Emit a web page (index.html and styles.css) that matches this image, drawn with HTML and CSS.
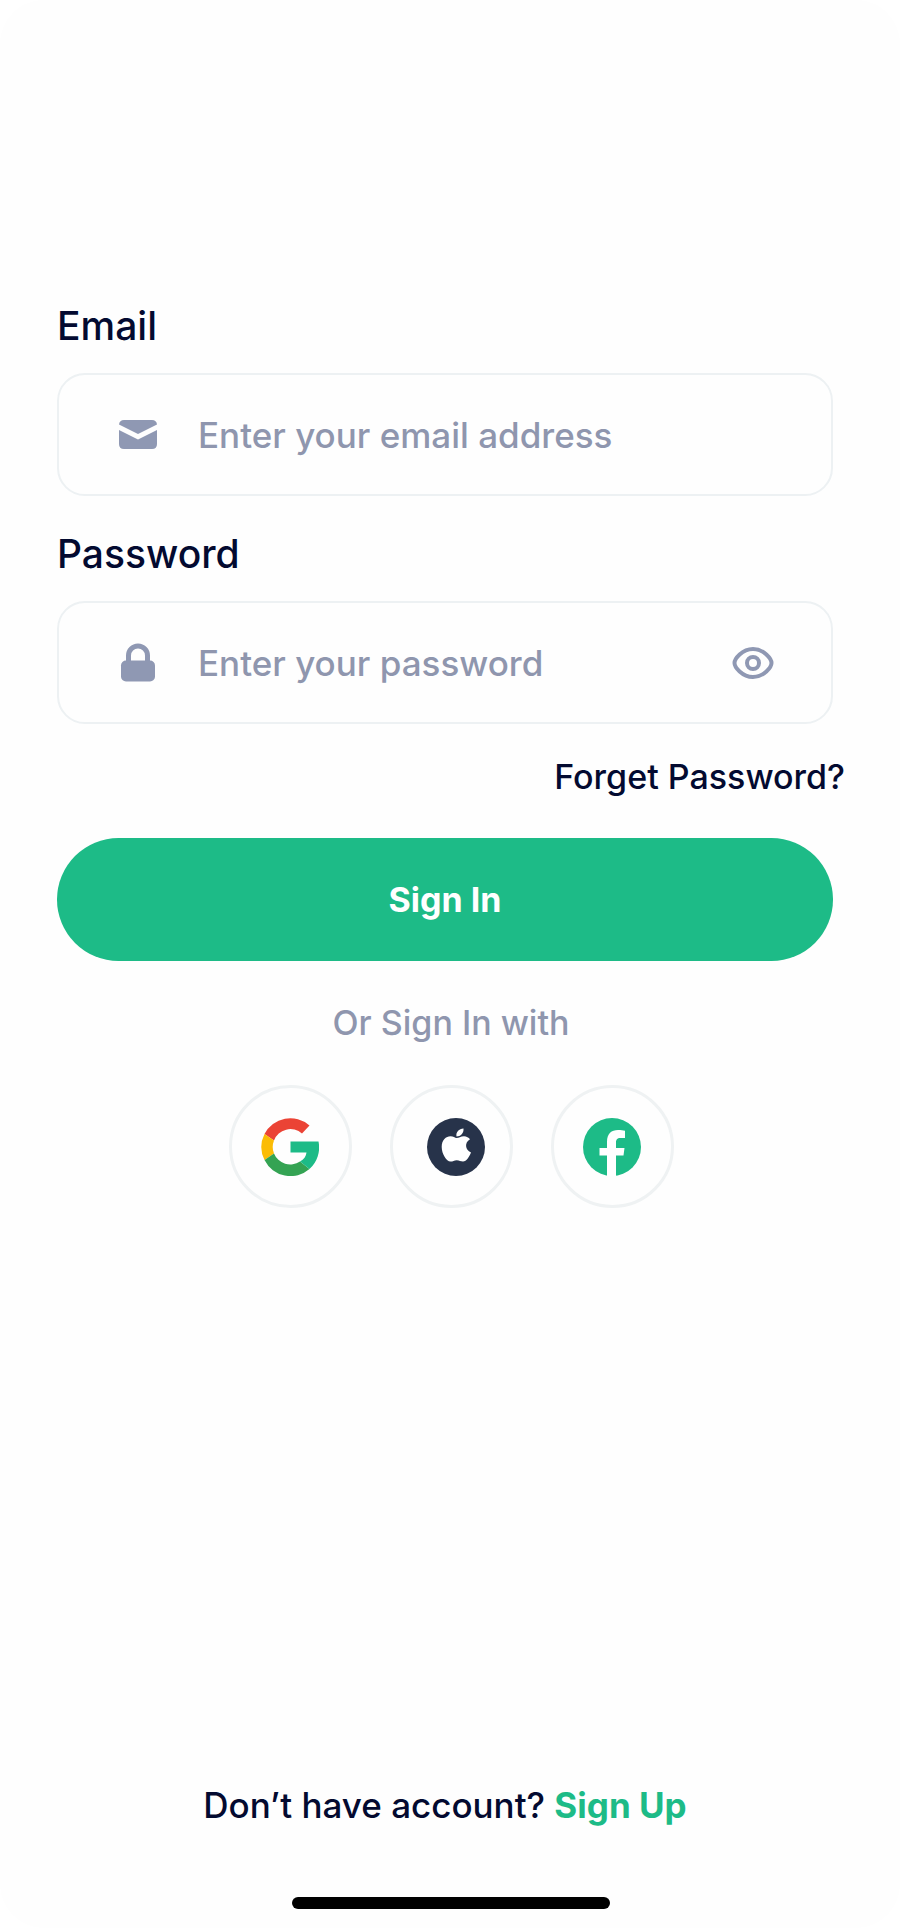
FILE: index.html
```html
<!DOCTYPE html>
<html lang="en">
<head>
<meta charset="utf-8">
<meta name="viewport" content="width=device-width, initial-scale=1">
<title>Sign In</title>
<link rel="stylesheet" href="styles.css">
</head>
<body>
<main class="screen">
  <form class="form">
    <label class="label" for="email">Email</label>
    <div class="field">
      <svg class="field-icon" viewBox="0 0 40 40" aria-hidden="true">
        <path d="M1 9.500Q1.500 5 6 5H34Q38.500 5 39 9.500L20 19Z"/>
        <path d="M1 15L20 24.500L39 15V29Q39 34 34 34H6Q1 34 1 29Z"/>
      </svg>
      <input class="input" id="email" type="email" placeholder="Enter your email address">
    </div>
    <label class="label label-next" for="password">Password</label>
    <div class="field">
      <svg class="field-icon" viewBox="0 0 40 40" aria-hidden="true">
        <rect x="3" y="17.500" width="34" height="21" rx="5"/>
        <path class="stroke" d="M10.500 20V12.500a9.500 9.500 0 0 1 19 0V20"/>
      </svg>
      <input class="input" id="password" type="password" placeholder="Enter your password">
      <button class="reveal" type="button" aria-label="Show password">
        <svg class="eye" viewBox="0 0 42 34" aria-hidden="true">
          <path d="M2.500 17C2.500 13 10 3 21 3S39.500 13 39.500 17S32 31 21 31S2.500 21 2.500 17Z"/>
          <circle cx="21" cy="17" r="6"/>
        </svg>
      </button>
    </div>
    <a class="forgot" href="#">Forget Password?</a>
    <button class="submit" type="submit">Sign In</button>
  </form>
  <p class="divider">Or Sign In with</p>
  <div class="social">
    <button class="provider" type="button" aria-label="Google">
      <svg class="logo" viewBox="0 0 58 58" aria-hidden="true">
        <path fill="#eb4335" d="M3.500 16A29 29 0 0 1 48.500 7.500L41 15.500A17.500 17.500 0 0 0 13 22.500Z"/>
        <path fill="#fbbc05" d="M3.500 16A29 29 0 0 0 3.500 42L13 35.500A17.500 17.500 0 0 1 13 22.500Z"/>
        <path fill="#34a353" d="M3.500 42A29 29 0 0 0 48.500 51L39 43.500A17.500 17.500 0 0 1 13 35.500Z"/>
        <path fill="#1dbb87" d="M29.500 23.500H57.500A29 29 0 0 1 48.500 51L39 43.500C43 41.500 45 38.500 45.500 34.500H29.500Z"/>
      </svg>
    </button>
    <button class="provider provider-apple" type="button" aria-label="Apple">
      <svg class="logo" viewBox="0 0 58 58" aria-hidden="true">
        <circle cx="29" cy="29" r="29" fill="#27334a"/>
        <g fill="#fff">
          <path d="M29.500 18.500C28.500 14.500 32 10.500 36.500 10.500C37 15 33.500 18.500 29.500 18.500Z"/>
          <path d="M29.500 20C32 20 33.500 18.200 37 18.200C39.500 18.200 41.800 19.500 43 21.300C37.300 24.500 38 32 44 34.500C42.500 38.500 39.500 43.500 36 43.500C33.500 43.500 32.500 42.200 29.800 42.200C27 42.200 26 43.600 23.500 43.600C19.500 43.600 14.700 35.800 14.700 29C14.700 22 19 18.300 23.500 18.300C26.300 18.300 28 20 29.500 20Z"/>
        </g>
      </svg>
    </button>
    <button class="provider" type="button" aria-label="Facebook">
      <svg class="logo" viewBox="0 0 58 58" aria-hidden="true">
        <circle cx="29" cy="29" r="29" fill="#1dbb87"/>
        <path fill="#fff" d="M24 58V37.500H16.500V30H24V24C24 15.500 28.500 12 35 12C38 12 40 12.300 42 12.700V20H37.500C34 20 33 22 33 24.500V30H41.500L40.500 37.500H33V58Z"/>
      </svg>
    </button>
  </div>
  <p class="signup">Don’t have account? <a class="signup-link" href="#">Sign Up</a></p>
  <div class="home-bar"></div>
</main>
</body>
</html>
```
FILE: styles.css
```css
* {
  box-sizing: border-box;
}

body {
  margin: 0;
  background: #fff;
  color: #030a30;
  font-family: Inter, "Liberation Sans", sans-serif;
  font-size: 34px;
  font-weight: 500;
  line-height: 44px;
}

button,
input {
  font: inherit;
}

.screen {
  display: flex;
  flex-direction: column;
  min-height: 100vh;
  padding: 302px 55px 19px 57px;
  border-radius: 44px;
  background: #fefefe;
}

.form {
  display: flex;
  flex-direction: column;
}

.label {
  align-self: flex-start;
  margin-bottom: 23px;
  font-size: 39px;
  line-height: 48px;
}

.label-next {
  margin-top: 34px;
}

.field {
  display: flex;
  align-items: center;
  height: 123px;
  margin-right: 12px;
  padding: 0 57px 0 59px;
  border: 2px solid #edf1f3;
  border-radius: 28px;
}

.field-icon {
  flex: none;
  width: 40px;
  height: 40px;
  margin-right: 40px;
  fill: #8f98b3;
}

.stroke {
  fill: none;
  stroke: #8f98b3;
  stroke-width: 5;
}

.input {
  flex: 1;
  min-width: 0;
  padding: 0;
  border: 0;
  outline: 0;
  background: transparent;
  color: inherit;
  font-size: 35px;
}

.input::placeholder {
  color: #8f96ae;
  opacity: 1;
}

.reveal {
  display: flex;
  padding: 0;
  border: 0;
  background: none;
}

.eye {
  width: 42px;
  height: 34px;
  fill: none;
  stroke: #8f98b3;
  stroke-width: 4;
}

.forgot {
  align-self: flex-end;
  margin: 31px 0 39px;
  color: inherit;
  text-decoration: none;
}

.submit {
  height: 123px;
  margin-right: 12px;
  border: 0;
  border-radius: 62px;
  background: #1dbb87;
  color: #fff;
  font-weight: 700;
}

.divider {
  margin: 40px 0;
  color: #8f96ae;
  text-align: center;
}

.social {
  display: flex;
  justify-content: center;
  gap: 38px;
}

.provider {
  display: flex;
  align-items: center;
  justify-content: center;
  width: 123px;
  height: 123px;
  padding: 0;
  border: 3px solid #eff2f3;
  border-radius: 50%;
  background: transparent;
}

.provider-apple {
  padding-left: 10px;
}

.logo {
  width: 58px;
  height: 58px;
}

.signup {
  margin: auto 12px 70px 0;
  font-size: 35px;
  text-align: center;
}

.signup-link {
  color: #1dbb87;
  font-weight: 700;
  text-decoration: none;
}

.home-bar {
  align-self: center;
  width: 41%;
  max-width: 318px;
  height: 12px;
  border-radius: 6px;
  background: #000;
}
```
